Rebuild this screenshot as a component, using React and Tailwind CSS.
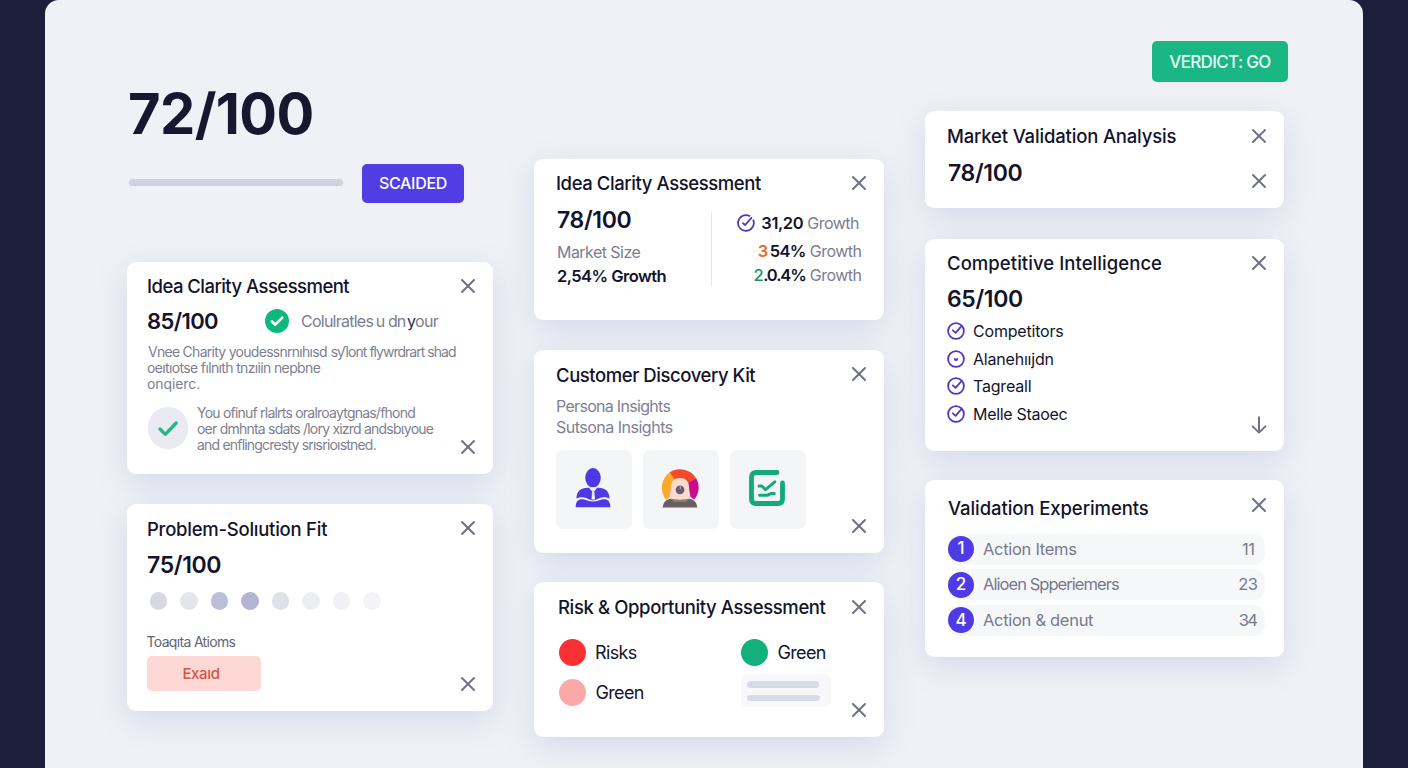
import React from "react";
import { X } from "lucide-react";

const TITLE = "h-6 whitespace-nowrap text-[18.5px] leading-6 font-medium";
const SCORE = "h-[26px] whitespace-nowrap text-[23px] leading-[26px] font-semibold tracking-[-0.35px]";

const Close = () => <X size={24} strokeWidth={2} />;

function Card({ className, children, action }) {
  return (
    <section className={`flex shrink-0 justify-between rounded-[9px] bg-white pr-[13.5px] shadow-[0_9px_32px_rgba(85,110,180,0.18)] ${className}`}>
      <div className="min-w-0 flex-1">{children}</div>
      <div className="flex w-6 shrink-0 flex-col justify-between text-[#6f7285]">
        <Close />
        {action}
      </div>
    </section>
  );
}

function ArrowDown() {
  return (
    <svg width="24" height="24" viewBox="0 0 24 24" fill="none" stroke="currentColor" strokeWidth="2" strokeLinecap="round" strokeLinejoin="round">
      <path d="M12 4.3v15.200M5.600 13.400 12 19.600l6.400-6.200" />
    </svg>
  );
}

function RingCheck({ variant = "check" }) {
  return (
    <svg className="shrink-0" width="18" height="18" viewBox="0 0 18 18" fill="none" stroke="#5339b8" strokeWidth="1.8" strokeLinecap="round" strokeLinejoin="round">
      {variant === "open" ? (
        <>
          <path d="M12.4 1.9A7.9 7.9 0 1 0 16.4 6.4" />
          <path d="M6 9.2 8.1 11 14.4 3.8" />
        </>
      ) : (
        <circle cx="9" cy="9" r="7.9" />
      )}
      {variant === "check" && <path d="M5.9 8.3 8.6 10.8 14.2 4.4" />}
      {variant === "dot" && <path d="M7.4 8.7c.2 2.400 3.100 2.400 3.300 0-.8.8-2.300.4-3.300 0Z" fill="#5339b8" strokeWidth="1.2" />}
    </svg>
  );
}

function PersonIcon() {
  return (
    <svg width="36" height="40" viewBox="0 0 36 40" fill="#4f39e4">
      <ellipse cx="18" cy="9.8" rx="7.8" ry="9.7" />
      <path d="M12.500 19.700h11C30 20.200 34.200 22.500 34.600 30.500c-5-2.300-9-1.200-12.400.8-2.900 1.500-5.500 1.500-8.400 0-3.400-2-7.400-3.100-12.400-.8.400-8 4.600-10.300 11.100-10.800Z" />
      <path d="M13.500 19.300h9l-3.300 4.200.9 8H16.500l.6-8Z" fill="#f4f5f7" />
      <path d="M17.300 21.500h1.400l.5 4.500-1.200 3-1.200-3Z" fill="#dcdcf4" />
      <path d="M.6 39.300c.2-4.300 1.200-6.700 3.500-7.600 5.200-1.800 8.500 1.800 13.900 1.800s8.700-3.600 13.900-1.800c2.300.9 3.300 3.300 3.500 7.600Z" />
    </svg>
  );
}

function AvatarIcon() {
  return (
    <svg width="38" height="40" viewBox="0 0 38 40">
      <path d="M19 19.500 9.800 3.600A19 19 0 0 0 5.300 32Z" fill="#fba92a" />
      <path d="M19 19.500 8.800 4.300A18.600 18.600 0 0 1 35.200 10.400Z" fill="#f4492b" />
      <path d="M19 19.500 35.200 10.200A18.600 18.600 0 0 1 33 31.800Z" fill="#c80d8b" />
      <path d="M1.600 39.600C2.500 33 6 31 11.500 30.400c4.500 4.200 10.500 4.200 15 0C32 31 35.500 33 36.400 39.600Z" fill="#6a5d60" />
      <path d="M10 19C10 13.300 13.800 10 19 10s9 3.300 9 9c0 4 1.200 5.600 1.200 8.500C29.200 31.600 25 33.800 19 33.800S8.800 31.600 8.800 27.500C8.800 24.600 10 23 10 19Z" fill="#fbdccd" />
      <path d="M9.500 30.500c5 1.500 14 1.500 19 0l-3 3.500h-13Z" fill="#8a7a7a" />
      <circle cx="19" cy="21.800" r="4.400" fill="#665f73" />
      <path d="M19.300 18v3" stroke="#b7a9ad" strokeWidth="1.200" />
    </svg>
  );
}

function ChecklistIcon() {
  return (
    <svg width="38" height="38" viewBox="0 0 38 38" fill="none" stroke="#12aa76" strokeLinejoin="round" strokeLinecap="round">
      <path d="M29 3.500H8C5 3.500 3.500 5 3.500 8v22c0 3 1.500 4.500 4.500 4.500h22c3 0 4.500-1.500 4.500-4.500V14" strokeWidth="4.800" />
      <path d="M11 17h2.800l3.700 3.700 9.300-7.900M11.500 26.300h7.500c2 0 2.800-1.800 4.300-1.800h3" strokeWidth="3" />
    </svg>
  );
}

function Tile({ children }) {
  return <div className="flex h-[79px] w-[76px] items-center justify-center rounded-[7px] bg-[#f4f5f7] pr-px pb-[2px]">{children}</div>;
}

const DOTS = ["bg-[#d8d8e5]", "bg-[#e4e4ec]", "bg-[#bcbdd8]", "bg-[#b3b4d5]", "bg-[#e0e0eb]", "bg-[#ededf4]", "bg-[#f0f0f6]", "bg-[#f3f3f8]"];

const COMPETITORS = [
  ["Competitors", "check", "tracking-[-0.2px]"],
  ["Alanehııjdn", "dot", "tracking-[-0.2px]"],
  ["Tagreall", "check", "tracking-[-0.2px]"],
  ["Melle Staoec", "check", "tracking-[-0.3px]"],
];

const ACTIONS = [
  ["1", "Action Items", "11", "tracking-[-0.3px]", "mr-[10px] tracking-[-0.4px]"],
  ["2", "Alioen Spperiemers", "23", "tracking-[-0.95px]", "mr-[7px] tracking-[-0.5px]"],
  ["4", "Action & denut", "34", "tracking-[-0.3px]", "mr-[8px] tracking-[-1.5px]"],
];

export default function App() {
  return (
    <div className="h-[768px] w-[1408px] overflow-hidden bg-[#1b1f3a] pl-[45px] font-['Inter',sans-serif] text-[#13142b]">
      <main className="flex h-[768px] w-[1318px] rounded-t-[14px] bg-[#f0f1f6] pl-[82px]">
        <div className="flex w-[366px] flex-col pt-[86px]">
          <h1 className="h-14 pl-px text-[56px] leading-14 font-bold tracking-[-0.6px] text-[#17182f]">72/100</h1>
          <div className="mt-[21px] flex h-10 items-center pl-[2px]">
            <div className="mb-[2px] h-[7px] w-[214px] rounded-full bg-[#d0d2de]" />
            <button className="ml-[19px] h-[39px] w-[102px] rounded-[5px] bg-[#523de4] text-[16px] font-medium tracking-[-0.3px] text-white">SCAIDED</button>
          </div>

          <Card className="mt-[58.500px] h-[212px] pt-[12.500px] pb-[15px] pl-[20px]" action={<Close />}>
            <h2 className={`${TITLE} tracking-[-0.54px]`}>Idea Clarity Assessment</h2>
            <div className="mt-[10px] flex h-[26px] items-center">
              <span className="w-[118px] text-[22px] leading-[26px] font-semibold tracking-[-0.6px]">85/100</span>
              <svg width="24" height="24" viewBox="0 0 24 24" className="shrink-0">
                <circle cx="12" cy="12" r="12" fill="#0dba7c" />
                <path d="m6.800 12.300 3.500 3.400 7-7" fill="none" stroke="#fff" strokeWidth="2.600" strokeLinecap="round" strokeLinejoin="round" />
              </svg>
              <span className="ml-3 flex whitespace-nowrap text-[16px] text-[#7b7d90]">
                <span className="w-[106px] tracking-[-0.75px]">Colulratles<span className="ml-[-1px] tracking-[-0.9px]"> u dn</span></span>
                <span className="tracking-[-0.700px]"><span className="text-[#34234f]">y</span>our</span>
              </span>
            </div>
            <div className="mt-[10px] h-12 pl-px text-[14px] leading-4 whitespace-nowrap text-[#7e8092]">
              <p className="flex">
                <span className="w-[189px] tracking-[-0.72px]">Vnee Charity youdessnrnıhısd</span>
                <span className="w-[40px] tracking-[-1px]">sƴlont</span>
                <span className="tracking-[-0.980px]">flywrdrart shad</span>
              </p>
              <p className="-ml-px tracking-[-0.64px]">oeıtıotse fılnıth tnzıiin nepbne</p>
              <p className="-ml-px tracking-[-0.1px]">onqierc.</p>
            </div>
            <div className="mt-[13px] flex pl-px">
              <div className="mt-[2px] flex h-[42px] w-10 shrink-0 items-center justify-center rounded-full bg-[#e9eaf2]">
                <svg width="22" height="22" viewBox="0 0 22 22" fill="none" stroke="#1fb783" strokeWidth="3.300" strokeLinecap="round" strokeLinejoin="round">
                  <path d="m3 12 5.300 5.300L19.200 6" />
                </svg>
              </div>
              <div className="ml-[9px] text-[14px] leading-4 whitespace-nowrap text-[#7e8092]">
                <p className="tracking-[-0.78px]">You ofinuf rlalrts oralroaytgnas/fhond</p>
                <p className="tracking-[-0.78px]">oer dmhnta sdats /lory xizrd andsbɩyoue</p>
                <p className="tracking-[-0.8px]">and enflingcresty srısrioıstned.</p>
              </div>
            </div>
          </Card>

          <Card className="mt-[30px] h-[207px] pt-[12.500px] pb-[15px] pl-[20px]" action={<Close />}>
            <h2 className={`${TITLE} mt-px tracking-[-0.25px]`}>Problem-Solıution Fit</h2>
            <div className={`${SCORE} mt-[11px]`}>75/100</div>
            <div className="mt-[14px] flex h-[18px] items-center gap-[13px] pl-[2.500px]">
              {DOTS.map((c, i) => <i key={i} className={`size-[17.500px] rounded-full ${c}`} />)}
            </div>
            <p className="mt-[23px] -ml-[0.500px] h-[17px] text-[14px] leading-[17px] tracking-[-0.67px] text-[#62657a]">Toaqıta Atioms</p>
            <button className="mt-[6px] block h-[35px] w-[114px] rounded-[5px] bg-[#fed8d5] pt-[2px] pr-[6px] text-[15px] font-medium tracking-[-0.35px] text-[#d25545]">Exaıd</button>
          </Card>
        </div>

        <div className="ml-[41px] flex w-[350px] flex-col pt-[158.500px]">
          <Card className="h-[161px] pt-[12.500px] pl-[23px]">
            <h2 className={`${TITLE} -ml-px tracking-[-0.420px]`}>Idea Clarity Assessment</h2>
            <div className="mt-[11px] flex">
              <div className="w-[153.500px]">
                <div className={`${SCORE} pt-px`}>78/100</div>
                <p className="mt-[11px] h-[18px] text-[16px] leading-[18px] tracking-[-0.550px] text-[#7b7d90]">Market Size</p>
                <p className="mt-[6px] h-[18px] text-[16.500px] leading-[18px] font-semibold tracking-[-0.550px]">2,54% Growth</p>
              </div>
              <div className="mt-[6px] -mb-[6px] h-[74px] w-[1.500px] shrink-0 bg-[#e3e6ee]" />
              <div className="-mr-[15px] flex flex-1 flex-col items-end pt-[5px] whitespace-nowrap text-[16.500px] leading-6 tracking-[-0.5px]">
                <p className="mr-[2.500px] flex h-6 items-center">
                  <RingCheck variant="open" />
                  <b className="ml-[6px] font-semibold tracking-[-0.400px]">31,20</b>
                  <span className="ml-[4px] text-[16px]  text-[#7b7d90]">Growth</span>
                </p>
                <p className="mt-1 flex h-6">
                  <b className="w-3 font-semibold text-[#e36a33]">3</b>
                  <b className="font-semibold tracking-[-0.700px]">54%</b>
                  <span className="ml-[4px] text-[16px] text-[#7b7d90]">Growth</span>
                </p>
                <p className="flex h-6">
                  <b className="font-medium text-[#1d8f6b]">2</b>
                  <b className="font-semibold tracking-[-1.100px]">.0.4%</b>
                  <span className="ml-[4px] text-[16px] text-[#7b7d90]">Growth</span>
                </p>
              </div>
            </div>
          </Card>

          <Card className="mt-[30px] h-[203px] pt-[12.500px] pb-[15px] pl-[21.500px]" action={<Close />}>
            <h2 className={`${TITLE} ml-[0.500px] mt-[0.500px] tracking-[-0.440px]`}>Customer Discovery Kit</h2>
            <div className="mt-[9px] ml-[0.500px] h-[43px] text-[16px] leading-[21.500px] text-[#7e8092]">
              <p className="tracking-[-0.700px]">Persona Insights</p>
              <p className="tracking-[-0.500px]">Sutsona Insights</p>
            </div>
            <div className="mt-[11px] flex gap-[11px]">
              <Tile><PersonIcon /></Tile>
              <Tile><AvatarIcon /></Tile>
              <Tile><ChecklistIcon /></Tile>
            </div>
          </Card>

          <Card className="mt-[29.500px] h-[155px] pt-[13px] pb-[15px] pl-[24px]" action={<Close />}>
            <h2 className={`${TITLE} tracking-[-0.380px]`}>Risk &amp; Opportunity Assessment</h2>
            <div className="mt-[20px] flex text-[18px] leading-[27px] tracking-[-0.650px]">
              <div className="w-[182px] space-y-[13px] pl-px">
                <p className="flex"><i className="mr-[9px] size-[27px] rounded-full bg-[#fb3035]" />Risks</p>
                <p className="flex"><i className="mr-[9.500px] size-[27px] rounded-full bg-[#fba8a8]" />Green</p>
              </div>
              <div className="pl-[0.500px]">
                <p className="flex"><i className="mr-[10px] size-[27px] rounded-full bg-[#12b17c]" />Green</p>
                <div className="mt-[8px] flex h-[33px] w-[90px] flex-col justify-center gap-[7px] rounded-[6px] bg-[#f8f8fb] pl-[6px] pt-px">
                  <i className="h-[6.500px] w-[72px] rounded-full bg-[#d8dae5]" />
                  <i className="h-[6.500px] w-[73px] rounded-full bg-[#d8dae5]" />
                </div>
              </div>
            </div>
          </Card>
        </div>

        <div className="ml-[40.500px] flex w-[359.500px] flex-col pt-[41px]">
          <div className="-mr-1 flex h-[41px] w-[136px] items-center justify-center self-end rounded-[5px] bg-[#1ab683] pt-[2px] text-[17px] font-medium tracking-[-0.650px] whitespace-nowrap text-[#e6fff6]">VERDICT: GO</div>

          <Card className="mt-[29px] h-[97px] pt-[13px] pb-[15px] pl-[22.500px]" action={<Close />}>
            <h2 className={`${TITLE} tracking-[-0.170px]`}>Market Validation Analysis</h2>
            <div className={`${SCORE} mt-[12px] pl-px`}>78/100</div>
          </Card>

          <Card className="mt-[30.500px] h-[212px] pt-[12.500px] pb-[14px] pl-[22.500px]" action={<ArrowDown />}>
            <h2 className={`${TITLE} tracking-[0.060px]`}>Competitive Intelligence</h2>
            <div className={`${SCORE} mt-[11px]`}>65/100</div>
            <ul className="mt-[5px]">
              {COMPETITORS.map(([name, icon, tracking]) => (
                <li key={name} className={`flex h-[27.800px] items-center text-[16px] ${tracking}`}>
                  <RingCheck variant={icon} />
                  <span className="ml-[8px]">{name}</span>
                </li>
              ))}
            </ul>
          </Card>

          <Card className="mt-[29.500px] h-[177px] pt-[12.500px] pl-[23.500px]">
            <h2 className={`${TITLE} mt-[3px] tracking-[-0.080px]`}>Validation Experiments</h2>
            <ul className="mt-[14px] -mr-[18px] space-y-[4.700px]">
              {ACTIONS.map(([n, label, count, tracking, countStyle]) => (
                <li key={n} className="flex h-[31px] items-center rounded-[12px] bg-[#f6f7f9] text-[16.500px] text-[#777a8d]">
                  <b className="flex size-[26px] items-center justify-center rounded-full bg-[#4f3be4] text-[17px] font-medium text-white">{n}</b>
                  <span className={`ml-[9px] ${tracking}`}>{label}</span>
                  <span className={`ml-auto ${countStyle}`}>{count}</span>
                </li>
              ))}
            </ul>
          </Card>
        </div>
      </main>
    </div>
  );
}
